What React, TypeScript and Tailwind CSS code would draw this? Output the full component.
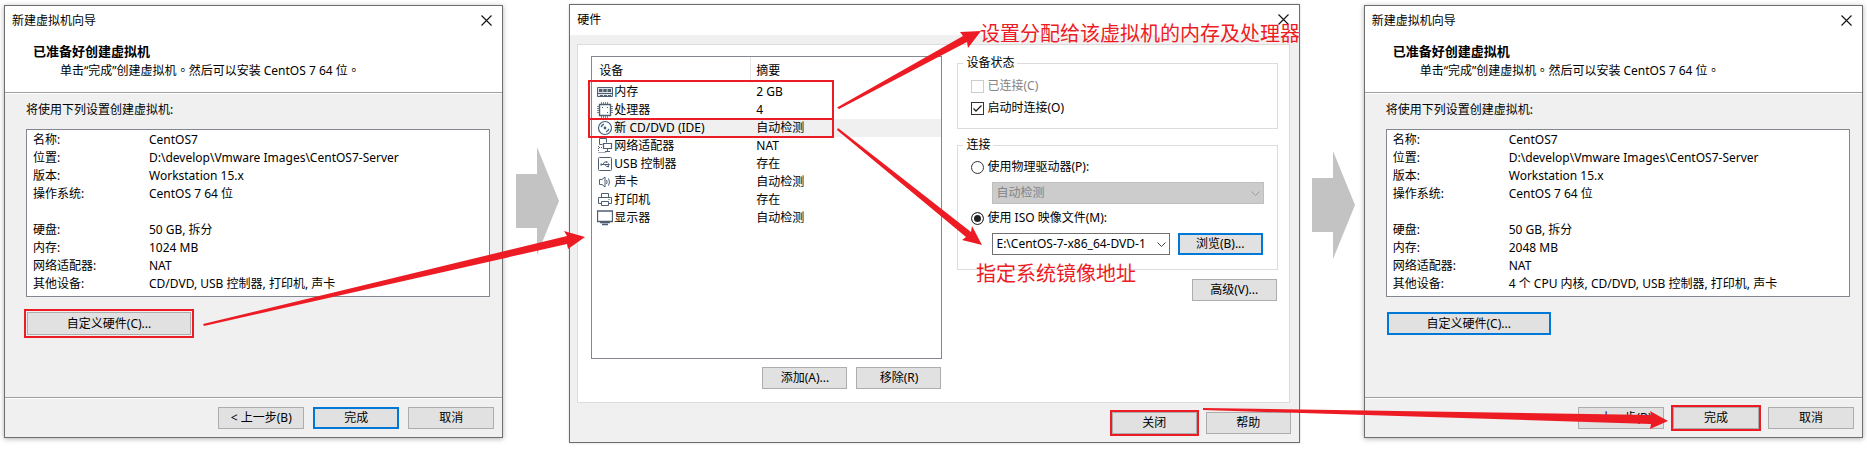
import React from "react";

const UI_FONT = "font-['Noto_Sans','Noto_Sans_CJK_SC',sans-serif]";

type ButtonTone = "plain" | "focused" | "marked" | "markedWide";

const BUTTON_TONES: Record<ButtonTone, string> = {
  plain: "border border-[#adadad]",
  focused: "border-2 border-[#0078d7]",
  marked: "border border-[#adadad] outline-2 outline-[#ed1c24]",
  markedWide: "border border-[#adadad] outline-2 outline-offset-1 outline-[#ed1c24]",
};

function Button({ children, tone = "plain", size = "w-[86px] h-[22px]" }: { children: React.ReactNode; tone?: ButtonTone; size?: string }) {
  return (
    <button type="button" className={`flex shrink-0 items-center justify-center whitespace-nowrap bg-[#e1e1e1] ${size} ${BUTTON_TONES[tone]}`}>
      {children}
    </button>
  );
}

function TitleBar({ title }: { title: string }) {
  return (
    <div className="flex h-[30px] items-center justify-between bg-white pl-[7px] pr-[10px]">
      <h1>{title}</h1>
      <button type="button" aria-label="关闭窗口" className="mb-0.5 flex">
        <svg width="11" height="11" viewBox="0 0 11 11" stroke="#111" strokeWidth="1.1" fill="none">
          <path d="M0.5 0.5 10.5 10.5M10.5 0.5 0.5 10.5" />
        </svg>
      </button>
    </div>
  );
}

function Stop() {
  return <span className="font-['Noto_Sans_CJK_TC',sans-serif]">。</span>;
}

function Wizard({ memory, devices, customTone, finishTone }: { memory: string; devices: string; customTone: ButtonTone; finishTone: ButtonTone }) {
  const rows: [string, string][] = [
    ["名称:", "CentOS7"],
    ["位置:", "D:\\develop\\Vmware Images\\CentOS7-Server"],
    ["版本:", "Workstation 15.x"],
    ["操作系统:", "CentOS 7 64 位"],
    ["", ""],
    ["硬盘:", "50 GB, 拆分"],
    ["内存:", memory],
    ["网络适配器:", "NAT"],
    ["其他设备:", devices],
  ];
  return (
    <section className="mt-[5px] min-w-0 flex-[499_1_0%] border border-[#6e6e6e] bg-[#f0f0f0] shadow-[0_1px_5px_rgba(0,0,0,0.3)]">
      <TitleBar title="新建虚拟机向导" />
      <header className="border-b border-[#a0a0a0] bg-white pb-[13px] pl-7 pt-[6px]">
        <h2 className="text-[13px] font-bold leading-[18px]">已准备好创建虚拟机</h2>
        <p className="mt-px h-[18px] whitespace-nowrap pl-[27px] leading-[18px]">
          单击“完成”创建虚拟机<Stop />然后可以安装 CentOS 7 64 位<Stop />
        </p>
      </header>
      <div className="border-t border-white pb-[62px] pl-[21px] pr-3 pt-[7px]">
        <p className="h-[18px] leading-[18px]">将使用下列设置创建虚拟机:</p>
        <table className="mt-[10px] block border border-[#828790] bg-white pb-[3px] pt-px">
          <tbody>
            {rows.map(([key, value], i) => (
              <tr key={i} className="h-[18px]">
                <th scope="row" className="w-[122px] p-0 pl-[6px] text-left font-normal leading-[18px]">{key}</th>
                <td className="whitespace-nowrap p-0 leading-[18px]">{value}</td>
              </tr>
            ))}
          </tbody>
        </table>
        <div className="mt-[15px] pl-px">
          <Button tone={customTone} size="w-[164px] h-[23px]">自定义硬件(C)...</Button>
        </div>
      </div>
      <footer className="border-t border-[#a0a0a0]">
        <div className="flex justify-end gap-[9px] border-t border-white py-2 pr-2">
          <Button>&lt; 上一步(B)</Button>
          <Button tone={finishTone}>完成</Button>
          <Button>取消</Button>
        </div>
      </footer>
    </section>
  );
}

function Icon({ children }: { children: React.ReactNode }) {
  return (
    <svg width="16" height="16" viewBox="0 0 16 16" fill="none" stroke="#4f5f70" strokeWidth="1" className="shrink-0">
      {children}
    </svg>
  );
}

const MemoryIcon = (
  <Icon>
    <path d="M0.5 3.5h15v9h-15z" fill="#dfe5ea" />
    <path d="M2 5h3.4v3H2zM6.3 5h3.4v3H6.3zM10.6 5H14v3h-3.4z" fill="#4f5f70" stroke="none" />
    <path d="M1 9.5h14" />
    <path d="M3 11.5h3M7 11.5h3M11 11.5h3" />
  </Icon>
);

const CpuIcon = (
  <Icon>
    <path d="M4.5 0v3M6.5 0v3M8.5 0v3M10.5 0v3M4.5 13v3M6.5 13v3M8.5 13v3M10.5 13v3M0 4.5h3M0 6.5h3M0 8.5h3M0 10.5h3M13 4.5h3M13 6.5h3M13 8.5h3M13 10.5h3" stroke="#7d8995" />
    <path d="M2.5 2.5h11v11h-11z" fill="#fff" strokeWidth="1.4" />
    <path d="M5 5h1v1H5zM10 5h1v1h-1zM10 10h1v1h-1z" fill="#4f5f70" stroke="none" />
  </Icon>
);

const DiscIcon = (
  <Icon>
    <circle cx="8" cy="8" r="6.5" fill="#fff" stroke="#41617f" strokeWidth="1.2" />
    <circle cx="8" cy="8" r="1.4" fill="#41617f" stroke="none" />
    <path d="M4.2 7.2A4 4 0 0 1 7 4.200M11.800 8.800A4 4 0 0 1 9 11.800" stroke="#41617f" strokeWidth="1.4" />
  </Icon>
);

const NetworkIcon = (
  <Icon>
    <path d="M9.5 4.500v-4h-7v6h3" />
    <path d="M6.5 5.5h8v5h-8z" fill="#fff" strokeWidth="1.2" />
    <path d="M10.5 10.5v3M8 13.5h5" />
    <path d="M1.5 8v6M1.5 14.5h7M2 9.500h3" strokeDasharray="1 1" />
  </Icon>
);

const UsbIcon = (
  <Icon>
    <rect x="1.5" y="1.5" width="13" height="13" rx="1" />
    <path d="M4 8.5h8M6 8.5l1.5-2.5h2M8 8.5l1.5 2h1.5" />
    <path d="M3.5 7.5h1.5v2H3.5zM9 5.2h1.500v1.500H9zM10.500 9.800H12v1.500h-1.500zM11 7l2 1.500-2 1.500z" fill="#4f5f70" stroke="none" />
  </Icon>
);

const SoundIcon = (
  <Icon>
    <path d="M2.500 5.500h2.500L8 3v10l-3-2.500H2.500z" />
    <path d="M9.500 6q1.300 2 0 4M11.500 4.500q2 3.500 0 7" />
  </Icon>
);

const PrinterIcon = (
  <Icon>
    <path d="M4.500 5.500v-4h7v4M4.500 11.500h-3v-6h13v6h-3" />
    <path d="M4.500 9.500h7v4h-7z" />
    <path d="M11.500 7.500h1" />
  </Icon>
);

const DisplayIcon = (
  <Icon>
    <path d="M0.500 1h15v10.500h-15z" strokeWidth="1.300" />
    <path d="M3 12.500h10M5 14.500h6" strokeWidth="1.300" />
  </Icon>
);

const DEVICES = [
  { icon: MemoryIcon, name: "内存", summary: "2 GB" },
  { icon: CpuIcon, name: "处理器", summary: "4" },
  { icon: DiscIcon, name: "新 CD/DVD (IDE)", summary: "自动检测", selected: true },
  { icon: NetworkIcon, name: "网络适配器", summary: "NAT" },
  { icon: UsbIcon, name: "USB 控制器", summary: "存在" },
  { icon: SoundIcon, name: "声卡", summary: "自动检测" },
  { icon: PrinterIcon, name: "打印机", summary: "存在" },
  { icon: DisplayIcon, name: "显示器", summary: "自动检测" },
];

function DeviceList() {
  return (
    <div className="relative h-[303px] border border-[#828790] bg-white">
      <table className="w-full table-fixed border-collapse">
        <thead>
          <tr className="h-[26px]">
            <th className="w-[159px] p-0 pl-[7px] pt-0.5 text-left font-normal shadow-[inset_-1px_0_0_#e5e5e5]">设备</th>
            <th className="p-0 pl-[5px] pt-0.5 text-left font-normal">摘要</th>
          </tr>
        </thead>
        <tbody>
          {DEVICES.map((d) => (
            <tr key={d.name} className="h-[18px]">
              <td className="p-0">
                <div className="flex h-[18px] items-center gap-px pl-[5px]">
                  {d.icon}
                  <span className={`flex-1 whitespace-nowrap leading-[18px] ${d.selected ? "bg-[#f0f0f0]" : ""}`}>{d.name}</span>
                </div>
              </td>
              <td className={`p-0 pl-[5px] leading-[18px] ${d.selected ? "bg-[#f0f0f0]" : ""}`}>{d.summary}</td>
            </tr>
          ))}
        </tbody>
      </table>
      <div className="absolute -left-1 top-[23px] h-[40px] w-[246px] border-2 border-[#ed1c24]" />
      <div className="absolute -left-1 top-[61px] h-[20px] w-[246px] border-2 border-[#ed1c24]" />
    </div>
  );
}

function Check({ id, label, checked, disabled }: { id: string; label: string; checked?: boolean; disabled?: boolean }) {
  return (
    <div className="flex h-[22px] items-center gap-[3px] pl-[13px]">
      <span className="relative flex">
        <input
          id={id}
          type="checkbox"
          defaultChecked={checked}
          disabled={disabled}
          className="peer size-[13px] appearance-none border border-[#333] bg-white disabled:border-[#ccc]"
        />
        <svg width="13" height="13" viewBox="0 0 13 13" className="pointer-events-none absolute inset-0 hidden peer-checked:block" fill="none" stroke="#222" strokeWidth="1.3">
          <path d="M2.5 6.5 5 9l5.500-5.500" />
        </svg>
      </span>
      <label htmlFor={id} className={disabled ? "text-[#838383]" : ""}>{label}</label>
    </div>
  );
}

function Radio({ id, label, checked }: { id: string; label: string; checked?: boolean }) {
  return (
    <div className="flex h-[22px] items-center gap-[3px] pl-[13px]">
      <input
        id={id}
        name="connection"
        type="radio"
        defaultChecked={checked}
        className="size-[13px] appearance-none rounded-full border border-[#333] bg-white checked:bg-[#222] checked:shadow-[inset_0_0_0_2px_#fff]"
      />
      <label htmlFor={id}>{label}</label>
    </div>
  );
}

function Combo({ label, value, disabled, className }: { label: string; value: string; disabled?: boolean; className: string }) {
  return (
    <div className={`relative h-[22px] ${className}`}>
      <select
        aria-label={label}
        disabled={disabled}
        className="h-full w-full appearance-none border border-[#707070] bg-white pl-[3px] opacity-100 disabled:border-[#bfbfbf] disabled:bg-[#ccc] disabled:text-[#838383]"
      >
        <option>{value}</option>
      </select>
      <svg width="9" height="6" viewBox="0 0 9 6" className="pointer-events-none absolute right-[4px] top-[9px]" fill="none" stroke={disabled ? "#9a9a9a" : "#444"}>
        <path d="M0.5 0.5 4.5 4.5 8.5 0.5" />
      </svg>
    </div>
  );
}

function HardwareDialog() {
  return (
    <section className="mt-1 min-w-0 flex-[731_1_0%] border border-[#6e6e6e] bg-[#f0f0f0] shadow-[0_0_2px_rgba(0,0,0,0.2)]">
      <TitleBar title="硬件" />
      <div className="ml-[7px] mr-[9px] mt-[9px] flex gap-[15px] border border-[#dcdcdc] bg-white pb-[13px] pl-[13px] pr-[11px]">
        <div className="min-w-0 flex-[352_1_0%] pt-[11px]">
          <DeviceList />
          <div className="mt-2 flex justify-end gap-[9px] pr-px">
            <Button size="w-[85px] h-[22px]">添加(A)...</Button>
            <Button size="w-[85px] h-[22px]">移除(R)</Button>
          </div>
        </div>
        <div className="min-w-0 flex-[321_1_0%] pt-[9px]">
          <fieldset className="border border-[#dcdcdc] pb-[9px]">
            <legend className="ml-[5px] px-[3px] leading-[18px]">设备状态</legend>
            <div className="pt-[3px]">
              <Check id="connected" label="已连接(C)" disabled />
              <Check id="connect-at-start" label="启动时连接(O)" checked />
            </div>
          </fieldset>
          <fieldset className="mt-[7px] border border-[#dcdcdc] pb-[14px]">
            <legend className="ml-[5px] px-[3px] leading-[18px]">连接</legend>
            <div className="pt-[2px]">
              <Radio id="physical" label="使用物理驱动器(P):" />
              <Combo label="物理驱动器" value="自动检测" disabled className="ml-[34px] mr-[13px] mt-1" />
              <div className="pt-[3px]">
                <Radio id="iso" label="使用 ISO 映像文件(M):" checked />
              </div>
              <div className="ml-[34px] mr-[14px] mt-1 flex gap-2">
                <Combo label="ISO 映像文件" value="E:\CentOS-7-x86_64-DVD-1" className="min-w-0 flex-1" />
                <Button tone="focused" size="w-[85px] h-[22px]">浏览(B)...</Button>
              </div>
            </div>
          </fieldset>
          <div className="mt-[9px] flex justify-end pr-px">
            <Button size="w-[85px] h-[22px]">高级(V)...</Button>
          </div>
        </div>
      </div>
      <footer className="flex justify-end gap-[9px] pb-2 pr-2 pt-[9px]">
        <Button tone="marked" size="w-[85px] h-[22px]">关闭</Button>
        <Button size="w-[85px] h-[22px]">帮助</Button>
      </footer>
    </section>
  );
}

function StepArrow({ className }: { className: string }) {
  return (
    <div className={`shrink-0 ${className}`}>
      <svg width="43" height="108" viewBox="0 0 43 108" fill="#c3c3c3">
        <path d="M0 27h21V0l22 54-22 54V81H0z" />
      </svg>
    </div>
  );
}

function Annotations() {
  return (
    <div className="pointer-events-none absolute inset-0 text-[20px] leading-[24px] text-[#ed1c24]">
      <svg width="1867" height="451" viewBox="0 0 1867 451" fill="#ed1c24" className="absolute left-0 top-0">
        <path d="M203 324 567 236l-3-5 21 6-17 12-1-5L204 326z" />
        <path d="M837 107.5 963 36l-3-4 21-1-13 17-1-6L839 109z" />
        <path d="M838 128 971 232l1-6 10 19-20-5 4-3L837 130z" />
        <path d="M1203 408 1651 415l-1-4 18 10-18 8 1-5L1203 410z" />
      </svg>
      <p className="absolute left-[980px] top-[22px] whitespace-nowrap">设置分配给该虚拟机的内存及处理器</p>
      <p className="absolute left-[976px] top-[262px] whitespace-nowrap">指定系统镜像地址</p>
    </div>
  );
}

export default function App() {
  return (
    <main className={`relative flex items-start overflow-hidden bg-white px-1 pb-2 text-[12px] leading-[18px] text-black ${UI_FONT}`}>
      <Wizard memory="1024 MB" devices="CD/DVD, USB 控制器, 打印机, 声卡" customTone="markedWide" finishTone="focused" />
      <StepArrow className="w-[66px] pl-[13px] pt-[147px]" />
      <HardwareDialog />
      <StepArrow className="w-[64px] pl-3 pt-[151px]" />
      <Wizard memory="2048 MB" devices="4 个 CPU 内核, CD/DVD, USB 控制器, 打印机, 声卡" customTone="focused" finishTone="marked" />
      <Annotations />
    </main>
  );
}
